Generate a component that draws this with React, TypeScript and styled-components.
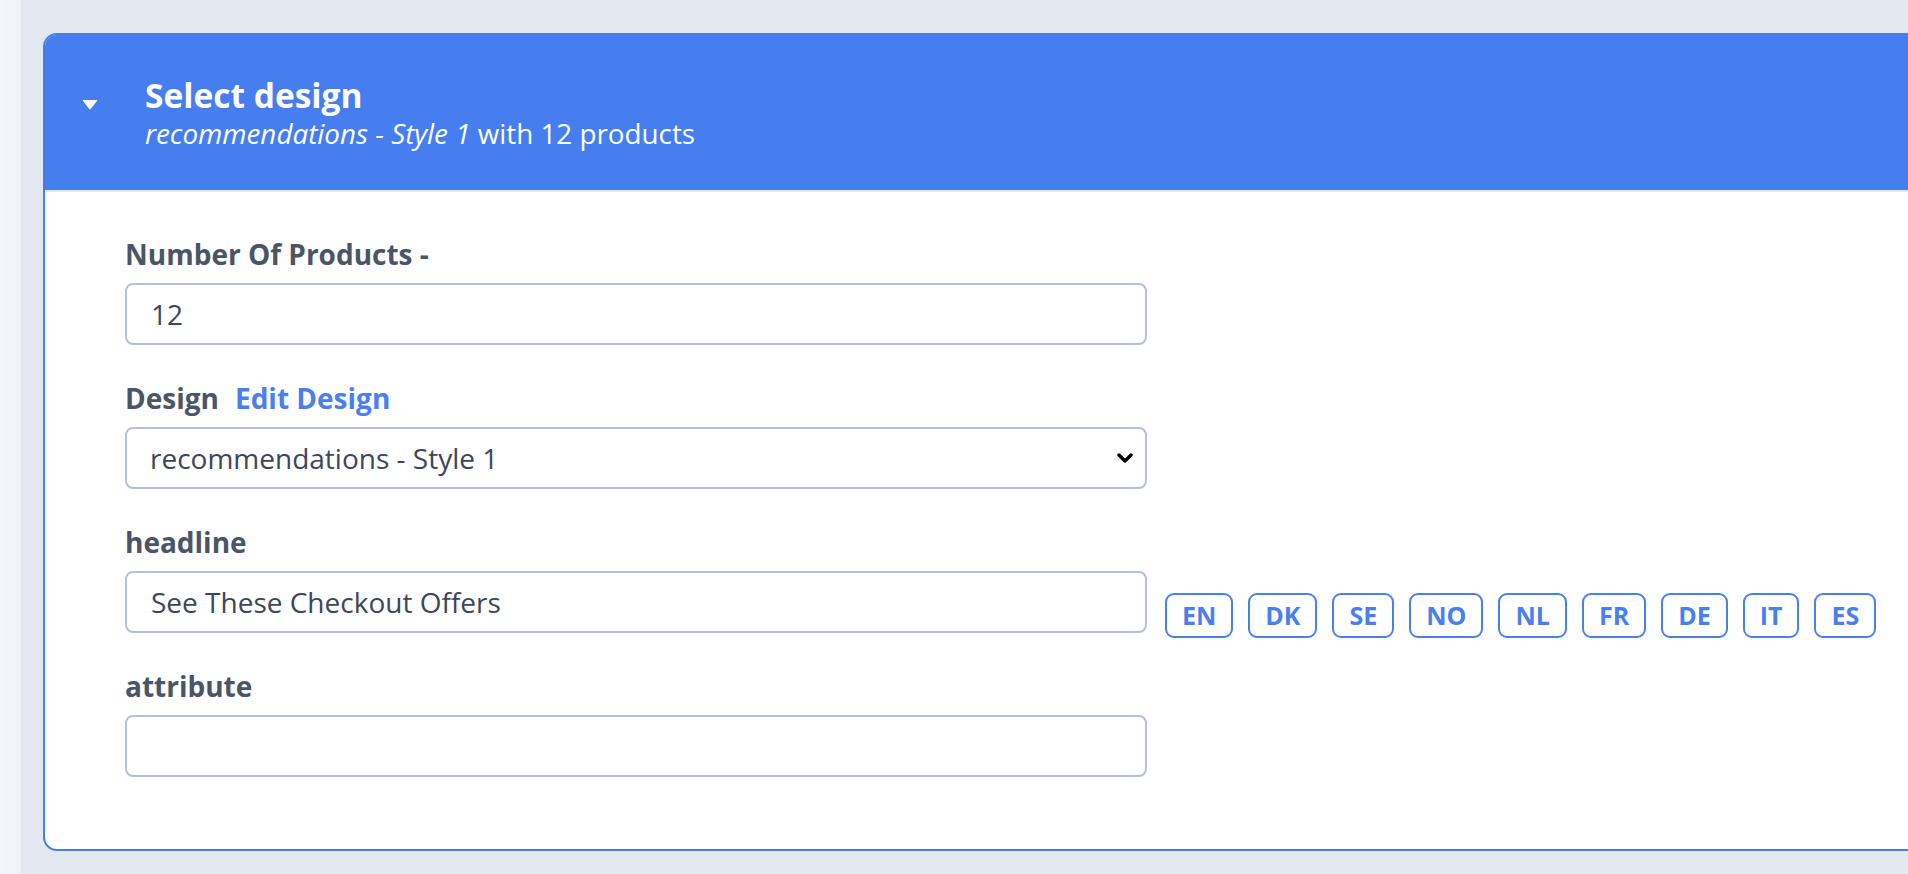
import React from "react";
import styled, { createGlobalStyle } from "styled-components";

const GlobalStyle = createGlobalStyle`
  html, body {
    margin: 0;
    padding: 0;
    background: #e2e7f0;
    overflow: hidden;
  }
  * { box-sizing: border-box; }
`;

const FONT = `"Open Sans", "Noto Sans", sans-serif`;
const BLUE = "#467ef0";

const Page = styled.div`
  display: flex;
  width: 100vw;
  height: 874px;
  overflow: hidden;
  font-family: ${FONT};
  background: #e2e7f0;
`;

const SideStrip = styled.div`
  flex: none;
  width: 21px;
  background: linear-gradient(to right, #f3f6fa 0%, #eff3f8 100%);
`;

const Main = styled.div`
  flex: none;
  padding: 33px 0 0 22px;
`;

const Card = styled.section`
  width: 1960px;
  background: #ffffff;
  border: 2px solid ${BLUE};
  border-radius: 14px;
  overflow: hidden;
`;

const Header = styled.header`
  display: flex;
  align-items: flex-start;
  background: ${BLUE};
  padding: 41px 0 38px 37px;
  border-bottom: 2px solid #e1e5ec;
  color: #ffffff;
`;

const Caret = styled.svg`
  flex: none;
  width: 16px;
  height: 11px;
  margin-top: 23px;
  margin-right: 47px;
`;

const HeaderText = styled.div`
  display: flex;
  flex-direction: column;
`;

const Title = styled.h2`
  margin: 0;
  font-size: 33.5px;
  line-height: 38px;
  font-weight: 700;
`;

const Subtitle = styled.div`
  font-size: 27.8px;
  line-height: 38px;
  font-weight: 400;
  em { font-style: italic; }
`;

const Body = styled.div`
  display: flex;
  flex-direction: column;
  gap: 33px;
  padding: 42px 0 72px 80px;
`;

const Field = styled.div`
  display: flex;
  flex-direction: column;
`;

const Label = styled.label`
  display: flex;
  align-items: baseline;
  gap: 16px;
  margin-bottom: 9px;
  font-size: 28px;
  line-height: 40px;
  font-weight: 700;
  color: #4a5568;
`;

const EditLink = styled.a`
  color: #4a7ff0;
  text-decoration: none;
  cursor: pointer;
`;

const Row = styled.div`
  display: flex;
  align-items: flex-start;
  gap: 18px;
`;

const TextInput = styled.input`
  width: 1022px;
  height: 62px;
  padding: 0 0 0 24px;
  border: 2px solid #b6c0d9;
  border-radius: 8px;
  background: #fff;
  font-family: ${FONT};
  font-size: 28px;
  color: #3d4759;
  outline: none;
`;

const SelectWrap = styled.div`
  position: relative;
  width: 1022px;
`;

const Select = styled.select`
  appearance: none;
  width: 100%;
  height: 62px;
  padding: 0 0 0 23px;
  border: 2px solid #b6c0d9;
  border-radius: 8px;
  background: #fff;
  font-family: ${FONT};
  font-size: 28px;
  color: #3d4759;
  outline: none;
`;

const Chevron = styled.svg`
  position: absolute;
  right: 14px;
  top: 26px;
  width: 16px;
  height: 10px;
  pointer-events: none;
`;

const LangGroup = styled.div`
  display: flex;
  gap: 15px;
  margin-top: 22px;
  margin-bottom: -5px;
`;

const LangButton = styled.button`
  height: 45px;
  padding: 0 15px;
  border: 2px solid #4a7ff0;
  border-radius: 9px;
  background: #fff;
  color: #4a7ff0;
  font-family: ${FONT};
  font-size: 25px;
  font-weight: 700;
  line-height: 1;
  cursor: pointer;
`;

const langs = ["EN", "DK", "SE", "NO", "NL", "FR", "DE", "IT", "ES"];

export default function App() {
  return (
    <>
      <GlobalStyle />
      <Page>
        <SideStrip />
        <Main>
          <Card>
            <Header>
              <Caret viewBox="0 0 16 11">
                <path d="M1.2 1 L14.8 1 Q15.6 1 15.1 1.8 L8.7 10 Q8 10.8 7.3 10 L0.9 1.8 Q0.4 1 1.2 1 Z" fill="#fff" />
              </Caret>
              <HeaderText>
                <Title>Select design</Title>
                <Subtitle>
                  <em>recommendations - Style 1</em> with 12 products
                </Subtitle>
              </HeaderText>
            </Header>
            <Body>
              <Field>
                <Label>Number Of Products -</Label>
                <Row>
                  <TextInput defaultValue="12" />
                </Row>
              </Field>
              <Field>
                <Label>
                  Design <EditLink>Edit Design</EditLink>
                </Label>
                <SelectWrap>
                  <Select defaultValue="s1">
                    <option value="s1">recommendations - Style 1</option>
                  </Select>
                  <Chevron viewBox="0 0 16 10">
                    <path d="M2 2 L8 8 L14 2" stroke="#000" strokeWidth="3.4" fill="none" strokeLinecap="round" strokeLinejoin="round" />
                  </Chevron>
                </SelectWrap>
              </Field>
              <Field>
                <Label>headline</Label>
                <Row>
                  <TextInput defaultValue="See These Checkout Offers" />
                  <LangGroup>
                    {langs.map((l) => (
                      <LangButton key={l}>{l}</LangButton>
                    ))}
                  </LangGroup>
                </Row>
              </Field>
              <Field>
                <Label>attribute</Label>
                <Row>
                  <TextInput defaultValue="" />
                </Row>
              </Field>
            </Body>
          </Card>
        </Main>
      </Page>
    </>
  );
}
